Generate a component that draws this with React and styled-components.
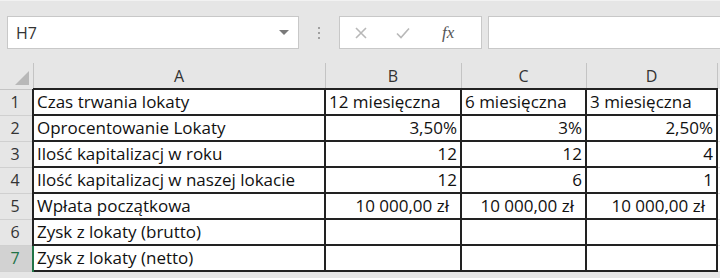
import React from "react";
import styled, { createGlobalStyle } from "styled-components";

const Global = createGlobalStyle`
  html, body {
    margin: 0;
    padding: 0;
    background: #ffffff;
    font-family: "Open Sans", "Liberation Sans", sans-serif;
  }
`;

const Sheet = styled.div`
  width: 720px;
  height: 278px;
  overflow: hidden;
  background: #e6e6e6;
`;

const FormulaBar = styled.div`
  display: flex;
  align-items: center;
  height: 33px;
  padding: 15px 0 14px 7px;
  border-top: 1px solid #f2f2f2;
  box-sizing: content-box;
`;

const NameBox = styled.div`
  width: 292px;
  height: 33px;
  background: #fff;
  border: 1px solid #c8c8c8;
  display: flex;
  align-items: center;
  justify-content: space-between;
  padding: 0 9px 0 8px;
  box-sizing: border-box;
  font-size: 16px;
  color: #333;
`;

const Caret = styled.span`
  width: 0;
  height: 0;
  border-left: 5px solid transparent;
  border-right: 5px solid transparent;
  border-top: 5px solid #7a7a7a;
`;

const Grip = styled.div`
  width: 40px;
  display: flex;
  flex-direction: column;
  align-items: center;
  gap: 3px;
  span {
    width: 2px;
    height: 2px;
    background: #a0a0a0;
  }
`;

const ButtonGroup = styled.div`
  width: 143px;
  height: 33px;
  background: #fff;
  border: 1px solid #c8c8c8;
  box-sizing: border-box;
  display: flex;
  align-items: center;
  padding-left: 14px;
  gap: 27px;
  color: #b8b8b8;
`;

const Fx = styled.span`
  font-family: "Liberation Serif", serif;
  font-style: italic;
  font-size: 17px;
  color: #555;
  margin-left: 4px;
`;

const Input = styled.div`
  flex: 1;
  height: 33px;
  margin-left: 6px;
  background: #fff;
  border: 1px solid #c8c8c8;
  border-right: none;
  box-sizing: border-box;
`;

const Table = styled.table`
  border-collapse: collapse;
  table-layout: fixed;
  width: 720px;
  font-size: 17px;
  color: #111;
`;

const ColHead = styled.th`
  height: 25px;
  padding: 0;
  font-weight: 400;
  font-size: 16px;
  color: #333;
  background: #e6e6e6;
  border-left: 1px solid #c4c4c4;
  border-bottom: 2px solid #222;
  &:first-child {
    border-left: none;
    border-bottom: 1px solid #c4c4c4;
    position: relative;
  }
  &:last-child {
    border-bottom: none;
  }
`;

const Corner = styled.span`
  position: absolute;
  right: 4px;
  bottom: 4px;
  width: 0;
  height: 0;
  border-left: 14px solid transparent;
  border-bottom: 14px solid #b8b8b8;
`;

const RowHead = styled.th`
  height: 25px;
  padding: 0 2px 0 0;
  font-weight: 400;
  font-size: 16px;
  text-align: center;
  color: ${(p) => (p.$active ? "#217346" : "#333")};
  background: ${(p) => (p.$active ? "#d2d2d2" : "#e6e6e6")};
  border-bottom: 1px solid #d0d0d0;
  border-right: ${(p) => (p.$active ? "2px solid #217346" : "2px solid #222")};
`;

const Cell = styled.td`
  padding: 0 ${(p) => (p.$pad ? `${p.$pad}px` : "3px")} 0 3px;
  line-height: 20px;
  white-space: nowrap;
  overflow: hidden;
  background: #fff;
  text-align: ${(p) => (p.$right ? "right" : "left")};
  border: 2px solid #222;
  border-left: none;
`;

const Tail = styled.td`
  background: #fff;
  border-bottom: 1px solid #e0e0e0;
`;

const rows = [
  ["Czas trwania lokaty", "12 miesięczna", "6 miesięczna", "3 miesięczna"],
  ["Oprocentowanie Lokaty", "3,50%", "3%", "2,50%"],
  ["Ilość kapitalizacj w roku", "12", "12", "4"],
  ["Ilość kapitalizacj w naszej lokacie", "12", "6", "1"],
  ["Wpłata początkowa", "10 000,00 zł", "10 000,00 zł", "10 000,00 zł"],
  ["Zysk z lokaty (brutto)", "", "", ""],
  ["Zysk z lokaty (netto)", "", "", ""],
];

export default function App() {
  return (
    <Sheet>
      <Global />
      <FormulaBar>
        <NameBox>
          H7
          <Caret />
        </NameBox>
        <Grip>
          <span />
          <span />
          <span />
        </Grip>
        <ButtonGroup>
          <svg width="14" height="14" viewBox="0 0 14 14">
            <path d="M2 2 L12 12 M12 2 L2 12" stroke="#b8b8b8" strokeWidth="1.6" fill="none" />
          </svg>
          <svg width="16" height="14" viewBox="0 0 16 14">
            <path d="M2 7.5 L6 11.5 L14 2.5" stroke="#b8b8b8" strokeWidth="1.6" fill="none" />
          </svg>
          <Fx>fx</Fx>
        </ButtonGroup>
        <Input />
      </FormulaBar>
      <Table>
        <colgroup>
          <col style={{ width: 33 }} />
          <col style={{ width: 292 }} />
          <col style={{ width: 136 }} />
          <col style={{ width: 125 }} />
          <col style={{ width: 131 }} />
          <col />
        </colgroup>
        <thead>
          <tr>
            <ColHead>
              <Corner />
            </ColHead>
            <ColHead>A</ColHead>
            <ColHead>B</ColHead>
            <ColHead>C</ColHead>
            <ColHead>D</ColHead>
            <ColHead />
          </tr>
        </thead>
        <tbody>
          {rows.map((r, i) => (
            <tr key={i}>
              <RowHead $active={i === 6}>{i + 1}</RowHead>
              <Cell>{r[0]}</Cell>
              {r.slice(1).map((v, j) => (
                <Cell key={j} $right={i > 0} $pad={i === 4 ? 11 : 3}>
                  {v}
                </Cell>
              ))}
              <Tail />
            </tr>
          ))}
        </tbody>
      </Table>
    </Sheet>
  );
}
